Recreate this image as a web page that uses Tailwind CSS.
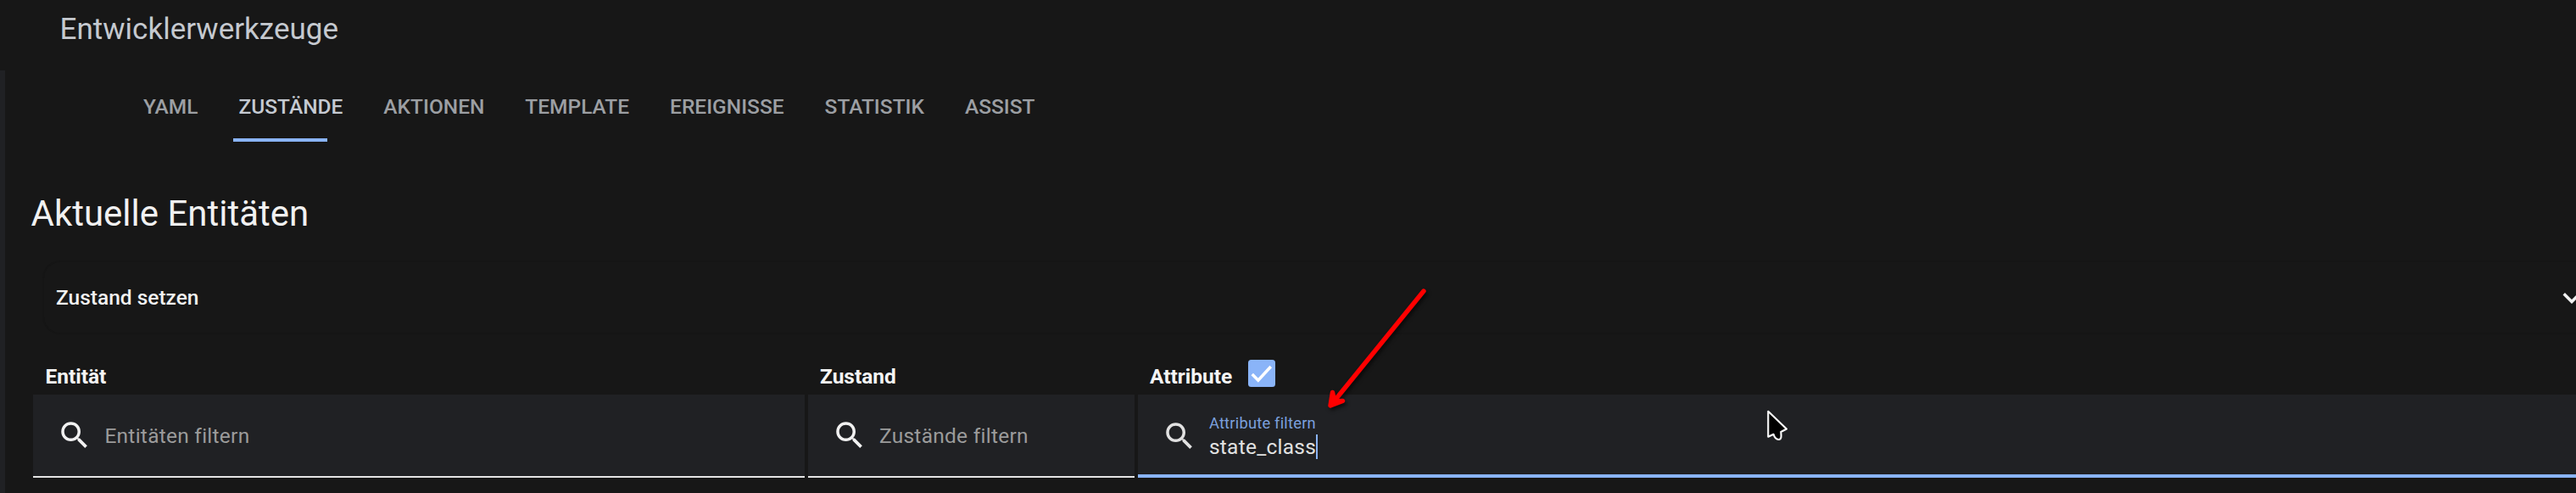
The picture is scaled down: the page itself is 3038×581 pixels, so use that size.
<!DOCTYPE html>
<html lang="de">
<head>
  <meta charset="UTF-8">
  <meta name="viewport" content="width=device-width, initial-scale=1.0">
  <title>Entwicklerwerkzeuge</title>
  <script src="https://cdn.jsdelivr.net/npm/@tailwindcss/browser@4"></script>
</head>
<body class="bg-[#171717] font-['Roboto',sans-serif] text-[24.5px] overflow-hidden">
  <div class="relative w-[3038px] h-[581px] overflow-hidden flex flex-col">
    <!-- Header -->
    <header class="h-[83px] shrink-0 pl-[70.6px]">
      <h1 class="text-[35px] leading-[70px] text-[#c5c9cf]">Entwicklerwerkzeuge</h1>
    </header>

    <div class="flex-1 border-l-6 border-[#202124]">
      <!-- Tabs -->
      <nav class="flex h-[84px] pl-[163px] gap-[47.95px] leading-[86px] font-medium text-[#9c9fa3] whitespace-nowrap">
        <span>YAML</span>
        <span class="relative text-[#c5cad2]">ZUSTÄNDE
          <span class="absolute -left-[6.5px] bottom-0 w-[111px] h-[4px] bg-[#8ab4f8]"></span>
        </span>
        <span>AKTIONEN</span>
        <span>TEMPLATE</span>
        <span>EREIGNISSE</span>
        <span>STATISTIK</span>
        <span>ASSIST</span>
      </nav>

      <h2 class="mt-[57px] pl-[30.5px] text-[42px] leading-[56px] text-[#f1f1f1]">Aktuelle Entitäten</h2>

      <!-- Set state panel -->
      <section class="mt-[27px] ml-[44px] w-[3010px] h-[87px] flex items-center border-2 border-[#151515] rounded-[21px] pl-[14px] text-[#f1f1f1]">
        <span class="w-[2945.5px] shrink-0 pt-[2px] font-medium">Zustand setzen</span>
        <svg class="size-[42px] shrink-0" viewBox="0 0 24 24" fill="#f1f1f1"><path d="M7.41,8.58L12,13.17L16.59,8.58L18,10L12,16L6,10L7.41,8.58Z"/></svg>
      </section>

      <!-- Filter table -->
      <div class="mt-[29px] ml-[33.4px] grid grid-cols-[910px_385.3px_1740px] gap-x-[3.6px] text-[#f4f4f4]">
        <div class="h-[41.5px] leading-[41.5px] pl-[14px] font-bold">Entität</div>
        <div class="h-[41.5px] leading-[41.5px] pl-[14px] font-bold">Zustand</div>
        <div class="h-[41.5px] leading-[41.5px] pl-[14px] font-bold flex">Attribute
          <span class="ml-[19px] mt-[1px] size-[31.5px] rounded-[3.5px] bg-[#8ab4f8]">
            <svg class="size-[31.5px]" viewBox="0 0 24 24" fill="none" stroke="#fff" stroke-width="2.7"><path d="M3.6 13 L9 18.4 L20.4 6.1"/></svg>
          </span>
        </div>

        <div class="h-[98px] flex items-center bg-[#202124] border-b-2 border-[#e4e4e4] pl-[28px]">
          <svg class="size-[42px] shrink-0" viewBox="0 0 24 24" fill="#f1f1f1"><path d="M9.5,3A6.5,6.5 0 0,1 16,9.5C16,11.11 15.41,12.59 14.44,13.73L14.71,14H15.5L20.5,19L19,20.5L14,15.5V14.71L13.73,14.44C12.59,15.41 11.11,16 9.5,16A6.5,6.5 0 0,1 3,9.5A6.5,6.5 0 0,1 9.5,3M9.5,5C7,5 5,7 5,9.5C5,12 7,14 9.5,14C12,14 14,12 14,9.5C14,7 12,5 9.5,5Z"/></svg>
          <span class="ml-[14px] mt-[4px] tracking-[0.26px] text-[#9b9b9b]">Entitäten filtern</span>
        </div>
        <div class="h-[98px] flex items-center bg-[#202124] border-b-2 border-[#e4e4e4] pl-[28px]">
          <svg class="size-[42px] shrink-0" viewBox="0 0 24 24" fill="#f1f1f1"><path d="M9.5,3A6.5,6.5 0 0,1 16,9.5C16,11.11 15.41,12.59 14.44,13.73L14.71,14H15.5L20.5,19L19,20.5L14,15.5V14.71L13.73,14.44C12.59,15.41 11.11,16 9.5,16A6.5,6.5 0 0,1 3,9.5A6.5,6.5 0 0,1 9.5,3M9.5,5C7,5 5,7 5,9.5C5,12 7,14 9.5,14C12,14 14,12 14,9.5C14,7 12,5 9.5,5Z"/></svg>
          <span class="ml-[14px] mt-[4px] tracking-[0.26px] text-[#9b9b9b]">Zustände filtern</span>
        </div>
        <div class="h-[98px] flex items-start bg-[#202124] border-b-4 border-[#8ab4f8] pl-[28px]">
          <svg class="size-[42px] shrink-0 mt-[28px]" viewBox="0 0 24 24" fill="#e1e1e1"><path d="M9.5,3A6.5,6.5 0 0,1 16,9.5C16,11.11 15.41,12.59 14.44,13.73L14.71,14H15.5L20.5,19L19,20.5L14,15.5V14.71L13.73,14.44C12.59,15.41 11.11,16 9.5,16A6.5,6.5 0 0,1 3,9.5A6.5,6.5 0 0,1 9.5,3M9.5,5C7,5 5,7 5,9.5C5,12 7,14 9.5,14C12,14 14,12 14,9.5C14,7 12,5 9.5,5Z"/></svg>
          <div class="ml-[14px] mt-[21px]">
            <div class="text-[18.375px] leading-[26px] tracking-[0.2px] text-[#7ba0dd]">Attribute filtern</div>
            <div class="flex items-center leading-[29px] tracking-[0.26px] text-[#e1e1e1]">state_class<span class="w-[2px] h-[29px] bg-[#8ab4f8]"></span></div>
          </div>
        </div>
      </div>
    </div>

    <!-- Arrow pointing at the attribute filter -->
    <svg class="absolute left-[1550px] top-[330px] w-[150px] h-[170px] drop-shadow-[2px_3px_2px_rgba(0,0,0,0.6)]" viewBox="0 0 150 170" fill="red" stroke="red" stroke-width="5.4" stroke-linecap="round" stroke-linejoin="round">
      <path d="M129 13 L20 147"/>
      <path d="M21.5 132.5 L19 148 L33.5 142.5 L24 143 Z"/>
    </svg>

    <!-- Mouse pointer -->
    <svg class="absolute left-[2080px] top-[480px] w-[34px] h-[44px]" viewBox="0 0 34 44" fill="#000" stroke="#fff" stroke-width="2.1" stroke-linejoin="round">
      <path d="M5.3 4.8 V34.8 L11.6 31.8 C13 36.5 14.5 38.2 18 38 C20.5 37.6 21 36 20.3 29 L27 25.5 Z"/>
    </svg>
  </div>
</body>
</html>
